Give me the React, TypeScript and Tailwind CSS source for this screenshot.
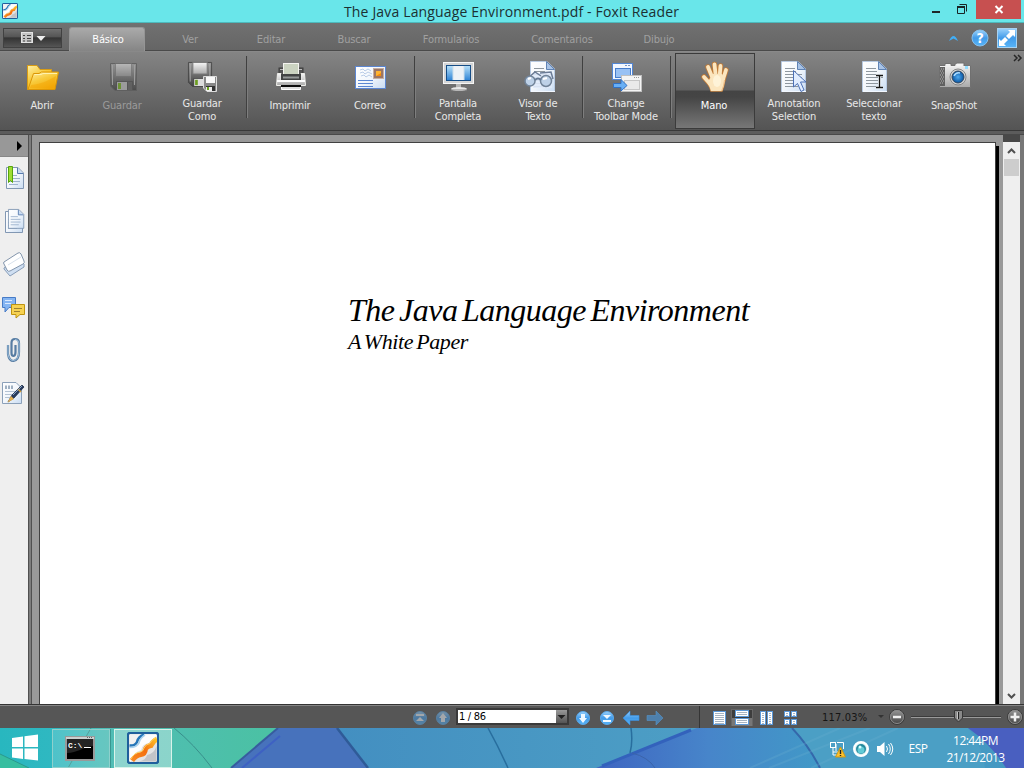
import type { ReactNode } from "react";

const UI = "font-['DejaVu_Sans_Condensed','DejaVu_Sans',sans-serif] [font-stretch:condensed]";
const SEGOE = "font-['Open_Sans','Noto_Sans',sans-serif] [font-stretch:normal]";

function Icon({ x = 0, y = 0, w, h, className = "", children }: { x?: number; y?: number; w: number; h: number; className?: string; children: ReactNode }) {
  return (
    <svg width={w} height={h} viewBox={`${x} ${y} ${w} ${h}`} className={`block shrink-0 ${className}`}>
      {children}
    </svg>
  );
}

function Defs() {
  return (
    <svg width="0" height="0" className="absolute">
      <defs>
        <linearGradient id="gold" x2="0.6" y2="1"><stop stopColor="#fff0a8" /><stop offset="0.5" stopColor="#f8cb3c" /><stop offset="1" stopColor="#f2a808" /></linearGradient>
        <linearGradient id="paper" x2="1" y2="1"><stop stopColor="#ffffff" /><stop offset="0.5" stopColor="#f3f7fc" /><stop offset="1" stopColor="#c9dcf2" /></linearGradient>
        <linearGradient id="silver" x2="0" y2="1"><stop stopColor="#f6f6f6" /><stop offset="1" stopColor="#a9a9a9" /></linearGradient>
        <linearGradient id="steel" x2="0" y2="1"><stop stopColor="#9a9a9a" /><stop offset="1" stopColor="#404040" /></linearGradient>
        <linearGradient id="blue" x2="0" y2="1"><stop stopColor="#9bd2fc" /><stop offset="0.5" stopColor="#429be9" /><stop offset="1" stopColor="#58b4f7" /></linearGradient>
        <linearGradient id="screen" x2="0" y2="1"><stop stopColor="#b9e2fa" /><stop offset="1" stopColor="#2d82d4" /></linearGradient>
        <linearGradient id="orange" gradientUnits="userSpaceOnUse" x1="5" y1="28" x2="30" y2="7"><stop stopColor="#f8871f" /><stop offset="0.5" stopColor="#f4700f" /><stop offset="1" stopColor="#ffc42a" /></linearGradient>
        <radialGradient id="lens"><stop stopColor="#4eaaf0" /><stop offset="1" stopColor="#08529e" /></radialGradient>
      </defs>
    </svg>
  );
}

function FoxitLogo({ size }: { size: number }) {
  return (
    <svg width={size} height={size} viewBox="0 0 32 32" className="block shrink-0">
      <rect x="1" y="1" width="30" height="30" rx="2" fill="#e4e4e4" stroke="#1f5f9c" strokeWidth="2" />
      <path d="M2.500 12Q7 13 9 9Q10 4 16 2.500H2.500Z" fill="#f2f2f2" />
      <path d="M2.500 29.500V16Q10 16 12 11Q13 4 18 2.500H29.500V5Q23 8 22 11Q15 12 14 18Q6 20 4 29.500Z" fill="#fdfdfd" />
      <path d="M12 29.500Q19 28 20 23Q27 22 29.500 14V29.500Z" fill="#c2c4c8" />
      <path d="M2.500 13.500Q8 14 10 10Q11 5 17 2.500" fill="none" stroke="#2576b9" strokeWidth="2.500" />
      <path d="M2.500 15.500Q10 15.500 12 11Q13 6 18 3" fill="none" stroke="#a9d2ee" strokeWidth="1.500" />
      <path d="M5 28.500Q9 23 14 22.500Q18 22 18.500 17Q20 14 24 13.500Q26 9 30 7" fill="none" stroke="url(#orange)" strokeWidth="5" />
      <path d="M4 27Q7 21 13 20Q17 19 17 16Q19 12 23 11.500Q24 8 29 5.500" fill="none" stroke="#ffd15c" strokeWidth="1" />
      <rect x="1" y="1" width="30" height="30" rx="2" fill="none" stroke="#1f5f9c" strokeWidth="2" />
    </svg>
  );
}

function Floppy({ dim = false }: { dim?: boolean }) {
  return (
    <g opacity={dim ? 0.75 : 1}>
      <path d="M0.5 0.5H26.5V27.5H5L0.5 23Z" fill="url(#steel)" stroke={dim ? "#5b5b5b" : "#454545"} />
      <path d="M2.5 2V22M24.5 2V22" stroke="#aaa" strokeWidth="1" />
      <rect x="5.5" y="0.5" width="16" height="13" fill="url(#silver)" stroke="#777" opacity={dim ? 0.55 : 1} />
      <rect x="6" y="18" width="17" height="9" fill="#4c4c4c" />
      <rect x="7" y="19" width="10" height="8" fill={dim ? "#aaa" : "#ddd"} />
      <rect x="8" y="20" width="3" height="6" fill="#6c9d20" />
      <rect x="18" y="19" width="4" height="8" fill="#5c5c5c" />
    </g>
  );
}

function DocPage() {
  return (
    <g>
      <path d="M0.5 0.5H17L24.500 8V30.500H0.500Z" fill="url(#paper)" stroke="#b8cae2" />
      <path d="M1 30.500H25" stroke="#f3f8ff" />
      <path d="M16.500 0.500V8.500H24.500Z" fill="#a8c3e6" stroke="#5f83b5" />
      <path d="M4 7.500H14M4 10.500H15M4 13.500H21M4 16.500H21M4 19.500H18M4 22.500H17M4 25.500H17" stroke="#8e979f" />
    </g>
  );
}

function OpenIcon() {
  return (
    <Icon x={24} y={58} w={38} h={36}>
      <path d="M27.500 65.500H37L40 69.500H51.500V89.500H27.500Z" fill="url(#gold)" stroke="#d99c14" />
      <path d="M28 89.500L33.500 73.500H39L41.500 72H58.500L55 89.500Z" fill="url(#gold)" stroke="#dc9605" />
      <path d="M31 85C42 84 49 80 56 76L54 88H30Z" fill="#f3a502" opacity="0.45" />
      <path d="M34.500 74.500H41L43 73.500H57" stroke="#fff2ad" fill="none" />
    </Icon>
  );
}
function SaveIcon() {
  return <Icon x={-6} y={-5} w={38} h={36}><Floppy dim /></Icon>;
}
function SaveAsIcon() {
  return (
    <Icon x={184} y={58} w={38} h={36}>
      <g transform="translate(188 62) scale(0.89)"><Floppy /></g>
      <g transform="translate(203 76)">
        <path d="M0.5 0.500H13.500V15.500H4L0.500 12Z" fill="#888" stroke="#ddd" />
        <rect x="3" y="1" width="9" height="6" fill="#f8f8f8" />
        <rect x="3" y="10" width="9" height="5" fill="#333" />
        <rect x="3" y="11" width="6" height="4" fill="#eee" /><rect x="4" y="11" width="2" height="3" fill="#6da51d" />
      </g>
    </Icon>
  );
}
function PrintIcon() {
  return (
    <Icon x={272} y={58} w={38} h={36}>
      <rect x="279" y="68" width="24" height="7" fill="#555" stroke="#3d3d3d" />
      <path d="M280 69.500H302" stroke="#bbb" />
      <rect x="283.500" y="63.500" width="15" height="12" fill="#cbd3c1" stroke="#f3f3ef" />
      <path d="M277.500 73.500H281V81H301V73.500H304.500L305.500 85.500H276.500Z" fill="url(#silver)" stroke="#eeeeea" />
      <rect x="281" y="74" width="20" height="7" fill="#424444" /><path d="M283 77.500H299" stroke="#959998" strokeWidth="2" />
      <rect x="277" y="80" width="28" height="2" fill="#fff" />
      <rect x="281" y="85" width="20" height="3" fill="#0d0d0d" />
      <path d="M281.500 87V89.500H300.500V87" fill="#ddd" stroke="#fff" />
    </Icon>
  );
}
function MailIcon() {
  return (
    <Icon x={352} y={58} w={38} h={36}>
      <rect x="355.500" y="66.500" width="30" height="22" fill="url(#paper)" stroke="#5c86d1" />
      <path d="M358 80.500H373M358 83.500H373M358 86.500H373" stroke="#5b87d2" />
      <path d="M360 70L363 69L365 71L368 69L371 71M360 73L363 72L365 74L368 72L372 74M361 76L364 75L366 77L369 75L372 77" stroke="#b9cce7" fill="none" />
      <rect x="373" y="68" width="11" height="11" fill="#9b7666" /><rect x="373.500" y="68.500" width="10" height="10" fill="none" stroke="#f1e7df" strokeDasharray="1 1" />
      <rect x="376" y="71" width="5" height="5" fill="#ffb432" /><path d="M376 76H381V73Z" fill="#f68b08" />
    </Icon>
  );
}
function ScreenIcon() {
  return (
    <Icon x={440} y={58} w={38} h={36}>
      <rect x="443.500" y="62.500" width="30" height="21" fill="#d4d5d6" stroke="#f6f6f6" />
      <rect x="446.500" y="65.500" width="24" height="15" fill="url(#screen)" stroke="#164d86" />
      <rect x="453" y="66" width="11" height="14" fill="#edf2f7" /><path d="M464 66V80M453 66V80" stroke="#cedeea" />
      <path d="M456 84H461V88H456Z" fill="#b7b7b7" /><ellipse cx="459" cy="89" rx="8" ry="2" fill="#e7e7e7" /><path d="M451 90H467" stroke="#888" />
    </Icon>
  );
}
function ReaderIcon() {
  return (
    <Icon x={520} y={58} w={38} h={36}>
      <g transform="translate(530 61)"><DocPage /></g>
      <rect x="533" y="73" width="19" height="15" fill="#e0eafa" opacity="0.9" />
      <path d="M527 79L535 72L541 76M540 73L551 72L553 79" fill="none" stroke="#6b7c96" strokeWidth="1.5" />
      <circle cx="530" cy="81" r="5" fill="#bed1e7" stroke="#718398" strokeWidth="1.500" />
      <circle cx="546" cy="81" r="5.500" fill="#bed1e7" stroke="#718398" strokeWidth="1.500" />
      <path d="M535 80Q538 77 541 80" fill="none" stroke="#667a94" strokeWidth="2" /><path d="M528 79L531 78M543 79L547 78" stroke="#fff" strokeWidth="2" />
    </Icon>
  );
}
function ModeIcon() {
  return (
    <Icon x={608} y={58} w={38} h={36}>
      <rect x="612.500" y="63.500" width="20" height="16" fill="#f2f7ff" stroke="#5286d3" />
      <rect x="615.500" y="68.500" width="15" height="9" fill="#98c1f4" stroke="#467dcc" />
      <path d="M625 65.500H627M628 65.500H630" stroke="#7895c5" />
      <rect x="621.500" y="75.500" width="20" height="16" fill="#f4f4f4" stroke="#c0c0c0" />
      <rect x="624.500" y="80.500" width="15" height="9" fill="#e9e9e9" stroke="#c5c5c5" /><path d="M634 77.500H640" stroke="#999" strokeDasharray="1 1" />
      <path d="M613.500 83.500H621V79.500L627 85.500L621 91V87.500H613.500Z" fill="#68aff5" stroke="#3070c4" />
    </Icon>
  );
}
function HandIcon() {
  const fingers = "M704 77L711 85M708 67L713 79M714.500 64.500L716 78M720.500 66L719.500 78M726 70L722.500 81";
  const palm = "M709 80L713 74H722L725 79Q724 86 722 91H711Q710 87 708 84Z";
  return (
    <Icon x={696} y={58} w={38} h={36}>
      <g fill="#c07b38" stroke="#c07b38" strokeLinecap="round"><path d={fingers} strokeWidth="5.500" /><path d={palm} strokeWidth="1.500" /></g>
      <g fill="#fbe6bf" stroke="#fbe6bf" strokeLinecap="round"><path d={fingers} strokeWidth="3.800" /><path d={palm} strokeWidth="0.200" /></g>
      <ellipse cx="717" cy="81" rx="4" ry="6" fill="#fff6de" opacity="0.8" />
      <path d="M721.500 91Q724 86 724.500 80" fill="none" stroke="#f0c08a" />
    </Icon>
  );
}
function AnnotationIcon() {
  return (
    <Icon x={776} y={58} w={38} h={36}>
      <g transform="translate(781 61)"><DocPage /></g>
      <path d="M793.500 70.500V87L797.500 83.500L801 91.500L804 90L800.500 82H806Z" fill="#e1edff" stroke="#4c70b5" />
    </Icon>
  );
}
function SelectTextIcon() {
  return (
    <Icon x={856} y={58} w={38} h={36}>
      <g transform="translate(862 61)"><DocPage /></g>
      <path d="M876 75.500H883M876 87.500H883M879.500 76V87" stroke="#eef4fa" strokeWidth="3" />
      <path d="M876 75.500H883M876 87.500H883M879.500 76V87" stroke="#151515" strokeWidth="1.300" />
    </Icon>
  );
}
function CameraIcon() {
  return (
    <Icon x={936} y={58} w={38} h={36}>
      <path d="M955 64L957 63H964V66H970.500V87.500H939.500V65.500H945V63.500H951V65.500H955Z" fill="url(#silver)" stroke="#707070" />
      <path d="M940 66.500H970" stroke="#eee" /><rect x="940" y="67" width="5" height="19" fill="#616161" />
      <path d="M941 69H945M940 71H944M941 73H945M940 75H944M941 77H945M940 79H944M941 81H945M940 83H944" stroke="#b4b4b4" strokeDasharray="1 1" />
      <circle cx="958" cy="77" r="8" fill="#d7d7d7" stroke="#868686" /><circle cx="958" cy="77" r="6" fill="url(#lens)" stroke="#34485d" />
      <path d="M954 76Q956 72 960 73" stroke="#abdbff" strokeWidth="1.500" fill="none" /><rect x="965" y="66" width="3" height="3" fill="#91dcff" /><rect x="957" y="64" width="5" height="2" fill="#f4f4f4" />
    </Icon>
  );
}

function Tool({ icon, lines, dim = false, active = false }: { icon: ReactNode; lines: string[]; dim?: boolean; active?: boolean }) {
  return (
    <div className={`flex h-[76px] w-20 shrink-0 flex-col items-center pt-[5px] ${active ? "bg-[linear-gradient(#858585_0px,#626262_37px,#444_38px,#454545_44px,#777_75px)] shadow-[inset_0_0_0_1px_#3b3b3b] " : ""}`}>
      {icon}
      <div className={`mr-[2px] text-center text-[11px] leading-[13px] tracking-[-0.15px] ${lines.length === 1 ? "mt-[5px]" : "mt-[3px]"} ${dim ? "text-[#9b9b9b]" : active ? "text-white" : "text-[#e8e8e8]"}`}>
        {lines.map((line) => <div key={line} className="whitespace-nowrap">{line}</div>)}
      </div>
    </div>
  );
}
function Divider() {
  return <div className="mt-[3px] flex h-[62px] w-2 shrink-0 justify-center"><div className="w-0.5 border-r border-[#7e7e7e] bg-[#404040]" /></div>;
}

function TitleBar() {
  return (
    <header className="flex h-[23px] shrink-0 border-b border-[#4db9bc] bg-[#69e6ea]">
      <div className="w-[344px] pt-[3px] pl-[2px]"><FoxitLogo size={16} /></div>
      <h1 className={`${SEGOE} w-[572px] text-[14px] leading-[23px] tracking-[0.16px] whitespace-nowrap text-[#1b3032]`}>The Java Language Environment.pdf - Foxit Reader</h1>
      <Icon x={916} w={60} h={20}>
        <path d="M932 12H940" stroke="#1d2728" strokeWidth="2" />
        <path d="M959.500 4.500H966.500V11.500M957.500 6.500H964.500V13.500H957.500Z" fill="none" stroke="#182426" /><path d="M957 7H965" stroke="#182426" strokeWidth="2" />
      </Icon>
      <div className="h-[19px] w-[45px] bg-[#c75050]"><Icon w={45} h={19}><path d="M19.500 6L26.500 13M26.500 6L19.500 13" stroke="#fff" strokeWidth="2" /></Icon></div>
    </header>
  );
}

function TabBar() {
  return (
    <nav className="flex h-7 shrink-0 border-b border-[#4a4a4a] bg-gradient-to-b from-[#717171] to-[#656565] text-[11px] leading-[14px] tracking-[-0.15px] text-[#a0a0a0]">
      <div className="w-[69px] pt-[5px] pl-[3px]">
        <div className="flex h-5 w-[59px] items-center border border-[#414141] bg-[linear-gradient(#707070,#565656_42%,#343434_50%,#555)]">
          <Icon x={4} y={29} w={57} h={18}>
            <rect x="21.500" y="32.500" width="11" height="10" fill="#c4c4c4" stroke="#e3e3e3" />
            <path d="M23 35.500H25M27 35.500H31M23 38.500H25M27 38.500H31M23 41H25M27 41H31" stroke="#424242" />
            <path d="M36.500 36H45.500L41 41Z" fill="#eee" />
          </Icon>
        </div>
      </div>
      <div className="mt-1 h-6 w-[76px] rounded-t-[3px] border border-b-0 border-[#959595] bg-gradient-to-b from-[#aaa] to-[#858585] pt-[5px] pl-[2px] text-center text-white">Básico</div>
      <div className="w-[90px] pt-[10px] text-center">Ver</div><div className="w-[72px] pt-[10px] text-center">Editar</div><div className="w-[94px] pt-[10px] text-center">Buscar</div>
      <div className="w-[100px] pt-[10px] text-center">Formularios</div><div className="w-[122px] pt-[10px] text-center">Comentarios</div><div className="w-[72px] pt-[10px] text-center">Dibujo</div>
      <Icon x={940} y={23} w={84} h={27} className="ml-auto">
        <path d="M949 41Q953.500 31 958 41L953.500 38.500Z" fill="#41aef6" />
        <circle cx="980" cy="38" r="8" fill="url(#blue)" stroke="#86c1ee" />
        <text x="980" y="43" textAnchor="middle" fontFamily="DejaVu Sans" fontWeight="bold" fontSize="14" fill="white">?</text>
        <rect x="997.500" y="28.500" width="19" height="19" fill="url(#blue)" stroke="#a7d2f2" />
        <path d="M1008 30H1015V37L1013 35L1009 39L1006 36L1010 32ZM999 39L1001 41L1005 37L1008 40L1004 44L1006 46H999Z" fill="#fff" />
      </Icon>
    </nav>
  );
}

function Ribbon() {
  return (
    <section className="shrink-0">
      <div className="flex h-[79px] bg-gradient-to-b from-[#858585] to-[#545454] pt-[2px] pl-[3px] shadow-[inset_0_1px_#898989]">
        <Tool icon={<OpenIcon />} lines={["Abrir"]} /><Tool icon={<SaveIcon />} lines={["Guardar"]} dim /><Tool icon={<SaveAsIcon />} lines={["Guardar", "Como"]} /><Divider />
        <Tool icon={<PrintIcon />} lines={["Imprimir"]} /><Tool icon={<MailIcon />} lines={["Correo"]} /><Divider />
        <Tool icon={<ScreenIcon />} lines={["Pantalla", "Completa"]} /><Tool icon={<ReaderIcon />} lines={["Visor de", "Texto"]} /><Divider />
        <Tool icon={<ModeIcon />} lines={["Change", "Toolbar Mode"]} /><Divider />
        <Tool icon={<HandIcon />} lines={["Mano"]} active /><Tool icon={<AnnotationIcon />} lines={["Annotation", "Selection"]} /><Tool icon={<SelectTextIcon />} lines={["Seleccionar", "texto"]} /><Tool icon={<CameraIcon />} lines={["SnapShot"]} />
        <Icon x={1010} y={53} w={14} h={12} className="ml-auto"><path d="M1014 55L1017 58L1014 61M1018 55L1021 58L1018 61" fill="none" stroke="#272727" strokeWidth="1.500" /></Icon>
      </div>
      <div className="h-[5px] border-t border-b border-t-[#383838] border-b-[#494949] bg-[#5c5c5c]" />
    </section>
  );
}

function SidePage() {
  return <><path d="M0.500 0.500H12L17.500 6V21.500H0.500Z" fill="url(#paper)" stroke="#8197b3" /><path d="M11.500 1V6.500H17" fill="#c7daf2" stroke="#577cb0" /><path d="M3 8.500H11M3 11.500H14M3 14.500H14M3 17.500H12" stroke="#9db2cd" /></>;
}

function Sidebar() {
  return (
    <aside className="flex w-7 shrink-0 flex-col bg-[#efefef]">
      <div className="h-[22px] border-b border-[#878787] bg-[#989898]"><Icon x={0} y={135} w={28} h={21}><path d="M17 141L22 146L17 151Z" fill="#000" /></Icon></div>
      <Icon x={0} y={157} w={28} h={43}><g transform="translate(6 167)"><SidePage /></g><path d="M8.500 166.500H12.500V182.500L10.500 180.500L8.500 182.500Z" fill="#9fdd35" stroke="#56a50e" /></Icon>
      <Icon x={0} y={200} w={28} h={43}><g transform="translate(5 211)"><SidePage /></g><g transform="translate(8 209) scale(0.900)"><SidePage /></g></Icon>
      <Icon x={0} y={243} w={28} h={43}><path d="M4 268L18 259L24 264V267L10 276L4 269Z" fill="#cfdff2" stroke="#889db8" /><path d="M4 262L18 253Q20 252 21 254L24 261Q25 263 23 264L10 271Q8 272 7 270L4 264Q3 263 4 262Z" fill="#fff" stroke="#8295ac" /><path d="M8 265L21 257" stroke="#d7e1ec" fill="none" /></Icon>
      <Icon x={0} y={286} w={28} h={43}>
        <path d="M2.500 297.500H15.500V307.500H9L5 312V307.500H2.500Z" fill="#85b5f2" stroke="#477bc6" /><path d="M5 300.500H12M5 303.500H11" stroke="#dbeaff" />
        <path d="M11.500 304.500H24.500V314.500H20L16 318V314.500H11.500Z" fill="#f6d252" stroke="#be9310" /><path d="M14 308.500H22M14 311.500H20" stroke="#9e8131" />
      </Icon>
      <Icon x={0} y={329} w={28} h={43}><path d="M8 345V354Q9 361 13.500 361Q19 360 19 352V343Q19 339 15 339Q11.500 339 11.500 343V353Q11.500 356 13.500 356Q15.500 355.500 15.500 352V345" fill="none" stroke="#587da3" strokeWidth="2.200" /><path d="M8 345V354Q9 360.500 13.500 360.500Q18.500 360 19 352V343Q18.500 339.500 15 339.500" fill="none" stroke="#a6c7e3" strokeWidth="0.900" /></Icon>
      <Icon x={0} y={372} w={28} h={43}>
        <path d="M2.500 382.500H16L21.500 388V403.500H2.500Z" fill="url(#paper)" stroke="#8ba0b9" /><path d="M5 391.500H17M5 394.500H15M5 397.500H14" stroke="#b4c3d4" /><path d="M6 385.500V389M9 385.500V389M12 385.500V389" stroke="#9fb0c2" strokeWidth="2" />
        <path d="M8 402L12 395L22 385L24 387L14 398Z" fill="#293b5b" stroke="#132340" strokeWidth="0.700" /><path d="M7.500 402.500L11 396L14 399Z" fill="#e7b04c" /><path d="M18 389L21 392" stroke="#d59e37" strokeWidth="1.500" /><path d="M13 395L22 386" stroke="#9ebee3" strokeWidth="0.800" />
      </Icon>
    </aside>
  );
}

function Viewer() {
  return (
    <main className="flex min-h-0 flex-1">
      <Sidebar />
      <div className="w-1 border-x border-[#505050] bg-[#7d7d7d]" />
      <div className="flex w-[971px] bg-[#999] pt-[7px] pl-[7px]">
        <article className="w-[957px] border-t border-r border-l border-[#414141] bg-white pt-[147px] pl-[308px] font-['Liberation_Serif',serif] text-black italic [font-stretch:normal]">
          <h2 className="text-[32px] leading-[40px] tracking-[-0.5px] [word-spacing:-3px] whitespace-nowrap">The Java Language Environment</h2>
          <h3 className="pt-px text-[22px] leading-[22px] tracking-[-0.4px] [word-spacing:-2px] whitespace-nowrap">A White Paper</h3>
        </article>
        <div className="mt-1 w-[3px] bg-black" />
      </div>
      <div className="flex w-[17px] flex-col border-t-[7px] border-[#484848] bg-[#efefef]">
        <Icon x={1003} y={142} w={17} h={17}><path d="M1008 153L1011.500 149.500L1015 153" fill="none" stroke="#505050" strokeWidth="2" /></Icon>
        <div className="mx-px h-[17px] bg-[#cdcdcd]" />
        <Icon x={1003} y={687} w={17} h={17} className="mt-auto"><path d="M1008 694L1011.500 697.500L1015 694" fill="none" stroke="#505050" strokeWidth="2" /></Icon>
      </div>
      <div className="w-1 bg-[#777]" />
    </main>
  );
}

function RoundArrow({ x, down = false, end = false, dim = false }: { x: number; down?: boolean; end?: boolean; dim?: boolean }) {
  return (
    <g transform={`translate(${x} 718)`} opacity={dim ? 0.5 : 1}>
      <circle r="6.500" fill="url(#blue)" stroke="#5ba8e8" />
      <g transform={down ? "rotate(180)" : ""} fill="#eff8ff">{end ? <path d="M-4 -4H4V-2H-4ZM0 -1L4 3H-4Z" /> : <path d="M0 -5L4 0H2V4H-2V0H-4Z" />}</g>
    </g>
  );
}

function MiniPage({ x, y, w, h }: { x: number; y: number; w: number; h: number }) {
  const lines = Array.from({ length: Math.floor((h - 2) / 2) }, (_, i) => y + 2.5 + i * 2);
  return <g><rect x={x + 0.5} y={y + 0.5} width={w - 1} height={h - 1} fill="#fff" stroke="#5c99d9" />{lines.map((line) => <path key={line} d={`M${x + 2} ${line}H${x + w - 2}`} stroke="#a7b4c2" />)}</g>;
}

function StatusBar() {
  return (
    <section className="flex h-6 shrink-0 border-t border-[#343434] bg-[#565656] text-[11px] shadow-[inset_0_1px_#858585]">
      <Icon x={0} y={705} w={456} h={23}><RoundArrow x={420} end dim /><RoundArrow x={443} dim /></Icon>
      <div className="mt-[3px] flex h-[17px] w-[113px] border-2 border-[#3a3a3a] bg-white">
        <span className="w-[98px] pl-px leading-[13px] tracking-[-0.3px] text-black">1 / 86</span>
        <Icon w={11} h={13} className="bg-gradient-to-b from-[#999] to-[#555]"><path d="M1.500 5H9.500L5.500 9Z" fill="#202020" /></Icon>
      </div>
      <Icon x={569} y={705} w={249} h={23}>
        <RoundArrow x={583} down /><RoundArrow x={607} down end />
        <path d="M623 718L630 711V715.500H639V720.500H630V725Z" fill="url(#blue)" stroke="#3b8fdd" strokeWidth="0.600" />
        <path d="M663 718L656 711V715.500H647V720.500H656V725Z" fill="#4e80ac" stroke="#5693ca" strokeWidth="0.600" />
        <path d="M699.500 706V728" stroke="#353535" />
        <MiniPage x={713} y={711} w={13} h={14} />
        <rect x="731.500" y="709.500" width="21" height="16" fill="#3d3d3d" stroke="#676767" /><rect x="732" y="718" width="20" height="8" fill="#777" />
        <MiniPage x={735} y={710} w={14} h={7} /><MiniPage x={735} y={718} w={14} h={7} />
        <MiniPage x={760} y={711} w={6} h={14} /><MiniPage x={767} y={711} w={6} h={14} />
        <MiniPage x={784} y={711} w={6} h={6} /><MiniPage x={791} y={711} w={6} h={6} /><MiniPage x={784} y={719} w={6} h={6} /><MiniPage x={791} y={719} w={6} h={6} />
      </Icon>
      <span className="w-[58px] pl-1 leading-[25px] tracking-[0.2px] text-[#151515]">117.03%</span>
      <Icon x={876} y={705} w={148} h={23}>
        <path d="M878 715H884L881 718Z" fill="#333" />
        <circle cx="897" cy="717" r="7.500" fill="url(#steel)" stroke="#3c3c3c" /><circle cx="897" cy="717" r="6.500" fill="none" stroke="#8b8b8b" /><path d="M893 717H901" stroke="#f0f0f0" strokeWidth="2.500" />
        <path d="M911 716.500H1001" stroke="#3b3b3b" /><path d="M911 717.500H1001" stroke="#9a9a9a" />
        <path d="M954.500 710.500H962.500V718L958.500 722L954.500 718Z" fill="#898989" stroke="#373737" /><path d="M958.500 712V719" stroke="#222" /><path d="M957.500 712V719" stroke="#c5c5c5" />
        <circle cx="1015" cy="717" r="7.500" fill="url(#steel)" stroke="#3c3c3c" /><circle cx="1015" cy="717" r="6.500" fill="none" stroke="#8b8b8b" /><path d="M1010.500 717H1019.500M1015 712.500V721.500" stroke="#f0f0f0" strokeWidth="2.500" />
      </Icon>
    </section>
  );
}

function Wallpaper() {
  return (
    <svg width="1024" height="40" viewBox="0 728 1024 40" className="absolute inset-0">
      <defs>
        <linearGradient id="wall" gradientUnits="userSpaceOnUse" x1="0" x2="1024" y1="0" y2="0"><stop stopColor="#28b7bf" /><stop offset="0.05" stopColor="#2fb8c1" /><stop offset="0.11" stopColor="#50bdb5" /><stop offset="0.26" stopColor="#4bc1a4" /></linearGradient>
        <linearGradient id="wallBlue"><stop stopColor="#438fc1" /><stop offset="0.55" stopColor="#4d9fc5" /><stop offset="1" stopColor="#4398c2" /></linearGradient>
        <linearGradient id="wallDeep"><stop stopColor="#3e65c1" /><stop offset="0.5" stopColor="#4785ca" /><stop offset="1" stopColor="#4199c7" /></linearGradient>
      </defs>
      <rect y="728" width="1024" height="40" fill="url(#wall)" /><path d="M0 754L29 768H0Z" fill="#37bea0" /><path d="M0 754L29 768" stroke="#2a998d" />
      <path d="M91 728L68 768M174 728Q194 744 212 768" stroke="#398f8b" fill="none" />
      <path d="M278 728H337L369 768H231Z" fill="#4772bc" /><path d="M278 728L231 768" stroke="#375c9f" strokeWidth="2" /><path d="M280 736L242 768" stroke="#3e61c3" strokeWidth="2" />
      <path d="M337 728H1024V768H368Z" fill="url(#wallBlue)" /><path d="M337 728L368 768" stroke="#2f5b98" strokeWidth="2.500" />
      <path d="M488 728Q499 748 508 768M631 728Q633 742 630 753" stroke="#286e9e" strokeWidth="1.500" fill="none" />
      <path d="M697 728L596 768H821Q809 746 792 728Z" fill="url(#wallDeep)" /><path d="M691 730L602 766" stroke="#3362bc" strokeWidth="3" /><path d="M632 753Q648 757 655 768" stroke="#3b64aa" fill="none" />
      <path d="M792 728Q809 746 820 768H985Q982 744 968 728Z" fill="#4b9fc5" /><path d="M792 728Q809 746 820 768" stroke="#3468ab" strokeWidth="2" fill="none" />
      <path d="M840 728L750 768M870 728L769 768M898 728L811 768" stroke="#70b3d2" strokeWidth="2" opacity="0.24" />
      <path d="M968 728H1024V768H1006Q991 744 968 728Z" fill="#495fc0" />
    </svg>
  );
}

function Taskbar() {
  return (
    <footer className={`${SEGOE} relative h-10 shrink-0 overflow-hidden text-white`}>
      <Wallpaper />
      <div className="relative flex h-full">
        <Icon x={0} y={728} w={52} h={40}><path d="M12 738L23 736.500V747H12ZM24.500 736.300L38 734.500V747H24.500ZM12 748.500H23V759L12 757.500ZM24.500 748.500H38V760.500L24.500 759Z" fill="white" /></Icon>
        <div className="mt-px h-[39px] w-[58px] border border-[#8fd0cc] bg-white/15 pt-[6px] pl-[12px] shadow-[1px_0_#399690]">
          <Icon w={31} h={26}><rect x="1" y="1" width="28" height="23" fill="#000" stroke="#999" strokeWidth="2" /><path d="M1 3H29V1H1Z" fill="#cbd0d0" /><path d="M22 1.500H28" stroke="#666" strokeDasharray="1 1" /><path d="M2 17C12 17 18 11 28 10V3H2Z" fill="#242424" /><text x="3" y="12" fontSize="8" fontFamily="Liberation Mono" fontWeight="bold" fill="#fff">C:\</text><path d="M19 11.500H26" stroke="#fff" /></Icon>
        </div>
        <div className="mt-px ml-[4px] h-[39px] w-[58px] border border-[#d9f3ea] bg-white/35 pt-[2px] pl-[12px]"><FoxitLogo size={32} /></div>
        <Icon x={825} y={728} w={75} h={40} className="ml-auto">
          <rect x="830.500" y="742.500" width="5" height="5" fill="none" stroke="white" /><path d="M833 748V755H840M837 742.500H843.500V749M836 751V744M838 757V752H833" fill="none" stroke="white" />
          <path d="M840.500 747L845.500 757H835.500Z" fill="#ffc22c" stroke="#c99717" /><path d="M840.500 750V754M840.500 755V756" stroke="#222" strokeWidth="1.400" />
          <circle cx="861" cy="749" r="7" fill="#dceff2" stroke="#fff" strokeWidth="2" /><circle cx="861" cy="749" r="5" fill="#25899d" /><circle cx="861" cy="750" r="3.500" fill="#62cad6" /><circle cx="860" cy="747" r="1.500" fill="#d6ffff" />
          <path d="M877 746H880L884.500 742V756L880 752H877Z" fill="white" /><path d="M886.500 746Q888.500 749 886.500 752M888.500 744Q892 749 888.500 754M890.500 743Q895 749 890.500 755" fill="none" stroke="white" />
        </Icon>
        <div className="w-[36px] pt-[12px] text-center text-[12px] leading-[17px] tracking-[-0.55px]">ESP</div>
        <div className="w-[78px] pt-[4px] pl-px text-center text-[12px] leading-[17px] tracking-[-0.55px] whitespace-nowrap">12:44PM<br />21/12/2013</div>
        <div className="w-[10px]" />
      </div>
    </footer>
  );
}

export default function App() {
  return (
    <div className={`${UI} flex h-[768px] w-[1024px] flex-col overflow-hidden bg-[#565656]`}>
      <Defs />
      <TitleBar />
      <TabBar />
      <Ribbon />
      <Viewer />
      <StatusBar />
      <Taskbar />
    </div>
  );
}
